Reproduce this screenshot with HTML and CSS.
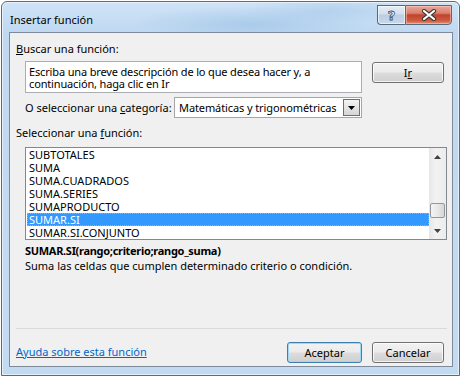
FILE: index.html
```html
<!DOCTYPE html>
<html>
<head>
<meta charset="utf-8">
<title>Insertar función</title>
<link rel="stylesheet" href="styles.css">
</head>
<body>

<div class="window">
    <div class="titlebar">
        <span class="title">Insertar función</span>
        <div class="caption">
            <span class="cap-btn cap-help">?</span>
            <span class="cap-btn cap-close">
                <svg width="16" height="12" viewBox="0 0 16 12">
                    <path d="M3 2 L13 10 M13 2 L3 10" stroke="#3a3a3a" stroke-width="4.2" stroke-linecap="round"/>
                    <path d="M3 2 L13 10 M13 2 L3 10" stroke="#fff" stroke-width="2.2" stroke-linecap="round"/>
                </svg>
            </span>
        </div>
    </div>

    <div class="client">
        <div class="label"><u>B</u>uscar una función:</div>

        <div class="search-row">
            <div class="search-box">Escriba una breve descripción de lo que desea hacer y, a<br>continuación, haga clic en Ir</div>
            <button class="btn btn-go">I<u>r</u></button>
        </div>

        <div class="category-row">
            <span>O seleccionar una <u>c</u>ategoría:</span>
            <div class="combo">
                <span class="combo-text">Matemáticas y trigonométricas</span>
                <span class="combo-btn">
                    <svg width="7" height="4" viewBox="0 0 7 4"><path d="M0 0 H7 L3.5 4 Z" fill="#000"/></svg>
                </span>
            </div>
        </div>

        <div class="label label-list">Seleccionar una <u>f</u>unción:</div>

        <div class="listbox">
            <ul class="items">
                <li>SUBTOTALES</li>
                <li>SUMA</li>
                <li>SUMA.CUADRADOS</li>
                <li>SUMA.SERIES</li>
                <li>SUMAPRODUCTO</li>
                <li class="selected">SUMAR.SI</li>
                <li>SUMAR.SI.CONJUNTO</li>
            </ul>
            <div class="scrollbar">
                <div class="sb-arrow">
                    <svg width="7" height="4" viewBox="0 0 7 4"><path d="M0 4 H7 L3.5 0 Z" fill="#404040"/></svg>
                </div>
                <div class="sb-track">
                    <div class="sb-thumb" style="margin-top: 38px"></div>
                </div>
                <div class="sb-arrow">
                    <svg width="7" height="4" viewBox="0 0 7 4"><path d="M0 0 H7 L3.5 4 Z" fill="#404040"/></svg>
                </div>
            </div>
        </div>

        <div class="syntax">SUMAR.SI(rango;criterio;rango_suma)</div>
        <div class="desc">Suma las celdas que cumplen determinado criterio o condición.</div>

        <div class="spacer"></div>
        <div class="separator"></div>

        <div class="footer">
            <a class="help-link" href="#">Ayuda sobre esta función</a>
            <div class="buttons">
                <button class="btn btn-default btn-ok">Aceptar</button>
                <button class="btn btn-cancel">Cancelar</button>
            </div>
        </div>
    </div>
</div>

</body>
</html>
```

FILE: styles.css
```css
* {
    box-sizing: border-box;
}

body {
    margin: 0;
    background: #ffffff;
    font-family: "Noto Sans", "Open Sans", sans-serif;
    font-size: 11px;
    line-height: 15px;
    color: #000;
}

.window {
    margin: 1px;
    width: 459px;
    height: 375px;
    display: flex;
    flex-direction: column;
    padding: 0 6px 8px 7px;
    border: 1px solid #5d6a79;
    border-radius: 6px 6px 0 0;
    background:
        radial-gradient(ellipse 120px 18px at 250px 22px, rgba(150, 190, 228, 0.55), rgba(150, 190, 228, 0) 100%),
        radial-gradient(ellipse 90px 14px at 330px 8px, rgba(160, 196, 232, 0.5), rgba(160, 196, 232, 0) 100%),
        linear-gradient(180deg, #cfe3f7 0px, #c0d9f1 30px, #c3dbf2 100%);
    box-shadow: inset 0 0 0 1px rgba(255, 255, 255, 0.55);
}

/* title bar */

.titlebar {
    height: 30px;
    display: flex;
    justify-content: space-between;
    align-items: flex-start;
    padding: 0 1px 0 1px;
}

.title {
    padding-top: 10px;
    font-size: 11px;
}

.caption {
    display: flex;
    margin-top: 3px;
}

.cap-btn {
    height: 20px;
    display: flex;
    align-items: center;
    justify-content: center;
    border: 1px solid #5b6878;
}

.cap-help {
    width: 28px;
    border-right: none;
    border-radius: 0 0 0 4px;
    background: linear-gradient(180deg, #e6eef7 0%, #d2dfed 45%, #bccde2 50%, #c9d9ec 100%);
    box-shadow: inset 0 0 0 1px rgba(255, 255, 255, 0.6);
    color: #fff;
    font-family: "DejaVu Sans", sans-serif;
    font-weight: bold;
    font-size: 13px;
    -webkit-text-stroke: 0.8px #3d4a5a;
}

.cap-close {
    width: 47px;
    border-radius: 0 0 4px 0;
    background: linear-gradient(180deg, #e9a99b 0%, #d9806d 40%, #c2432c 50%, #cd5a40 80%, #e28f73 100%);
    box-shadow: inset 0 0 0 1px rgba(255, 210, 200, 0.5);
}

/* client area */

.client {
    flex: 1;
    display: flex;
    flex-direction: column;
    border: 1px solid #7d8a99;
    background: #f0f0f0;
    padding: 8px 5px 3px 6px;
}

.label {
    height: 15px;
}

.search-row {
    display: flex;
    align-items: flex-start;
    margin: 5px 3px 0 9px;
}

.search-box {
    width: 337px;
    height: 32px;
    padding: 4px 3px 0 3px;
    line-height: 12px;
    letter-spacing: -0.15px;
    background: #fff;
    border: 1px solid #abadb3;
}

.btn {
    height: 21px;
    padding: 0;
    font-family: inherit;
    font-size: 11px;
    color: #000;
    border: 1px solid #707070;
    border-radius: 3px;
    background: linear-gradient(180deg, #f2f2f2 0%, #ebebeb 48%, #dddddd 52%, #cfcfcf 100%);
    box-shadow: inset 0 0 0 1px rgba(255, 255, 255, 0.75);
}

.btn-go {
    width: 72px;
    margin-left: auto;
    margin-top: 1px;
}

.category-row {
    display: flex;
    align-items: center;
    justify-content: space-between;
    margin: 4px 0 0 9px;
    width: 337px;
}

.combo {
    width: 188px;
    height: 21px;
    display: flex;
    align-items: center;
    justify-content: space-between;
    padding: 1px;
    background: #fff;
    border: 1px solid #a6a6a6;
}

.combo-text {
    padding-left: 3px;
    letter-spacing: -0.1px;
}

.combo-btn {
    width: 17px;
    height: 17px;
    display: flex;
    align-items: center;
    justify-content: center;
    border: 1px solid #6f6f6f;
    background: linear-gradient(180deg, #f4f4f4 0%, #e4e4e4 50%, #d6d6d6 100%);
}

.label-list {
    margin-top: 7px;
}

/* function list */

.listbox {
    display: flex;
    margin: 7px 0 0 9px;
    height: 93px;
    background: #fff;
    border: 1px solid #828790;
}

.items {
    flex: 1;
    list-style: none;
    margin: 0;
    padding: 0 0 0 1px;
}

.items li {
    height: 13px;
    line-height: 13px;
    padding-left: 2px;
}

.items li.selected {
    background: #3399ff;
    color: #fff;
    outline: 1px dotted #e0a060;
    outline-offset: -1px;
}

.scrollbar {
    width: 17px;
    display: flex;
    flex-direction: column;
    background: linear-gradient(90deg, #e6e6e6 0%, #f2f2f2 40%, #ececec 100%);
}

.sb-arrow {
    height: 17px;
    display: flex;
    align-items: center;
    justify-content: center;
}

.sb-track {
    flex: 1;
}

.sb-thumb {
    width: 15px;
    height: 15px;
    margin-left: 1px;
    border: 1px solid #979797;
    border-radius: 2px;
    background: linear-gradient(90deg, #f3f3f3 0%, #e8e8e8 50%, #d6d6d6 100%);
}

.syntax {
    margin: 3px 0 0 9px;
    font-weight: bold;
    letter-spacing: -0.3px;
}

.desc {
    margin-left: 9px;
}

.spacer {
    flex: 1;
}

.separator {
    height: 1px;
    background: #dadada;
}

.footer {
    display: flex;
    align-items: center;
    justify-content: space-between;
    margin-top: 13px;
    padding-right: 3px;
}

.help-link {
    color: #0066cc;
    text-decoration: underline;
    margin-top: -3px;
}

.buttons {
    display: flex;
    gap: 10px;
}

.btn-ok {
    width: 75px;
}

.btn-cancel {
    width: 72px;
}

.btn-default {
    border-color: #3c7fb1;
    box-shadow: inset 0 0 0 1px #9ed8f6;
}
```
